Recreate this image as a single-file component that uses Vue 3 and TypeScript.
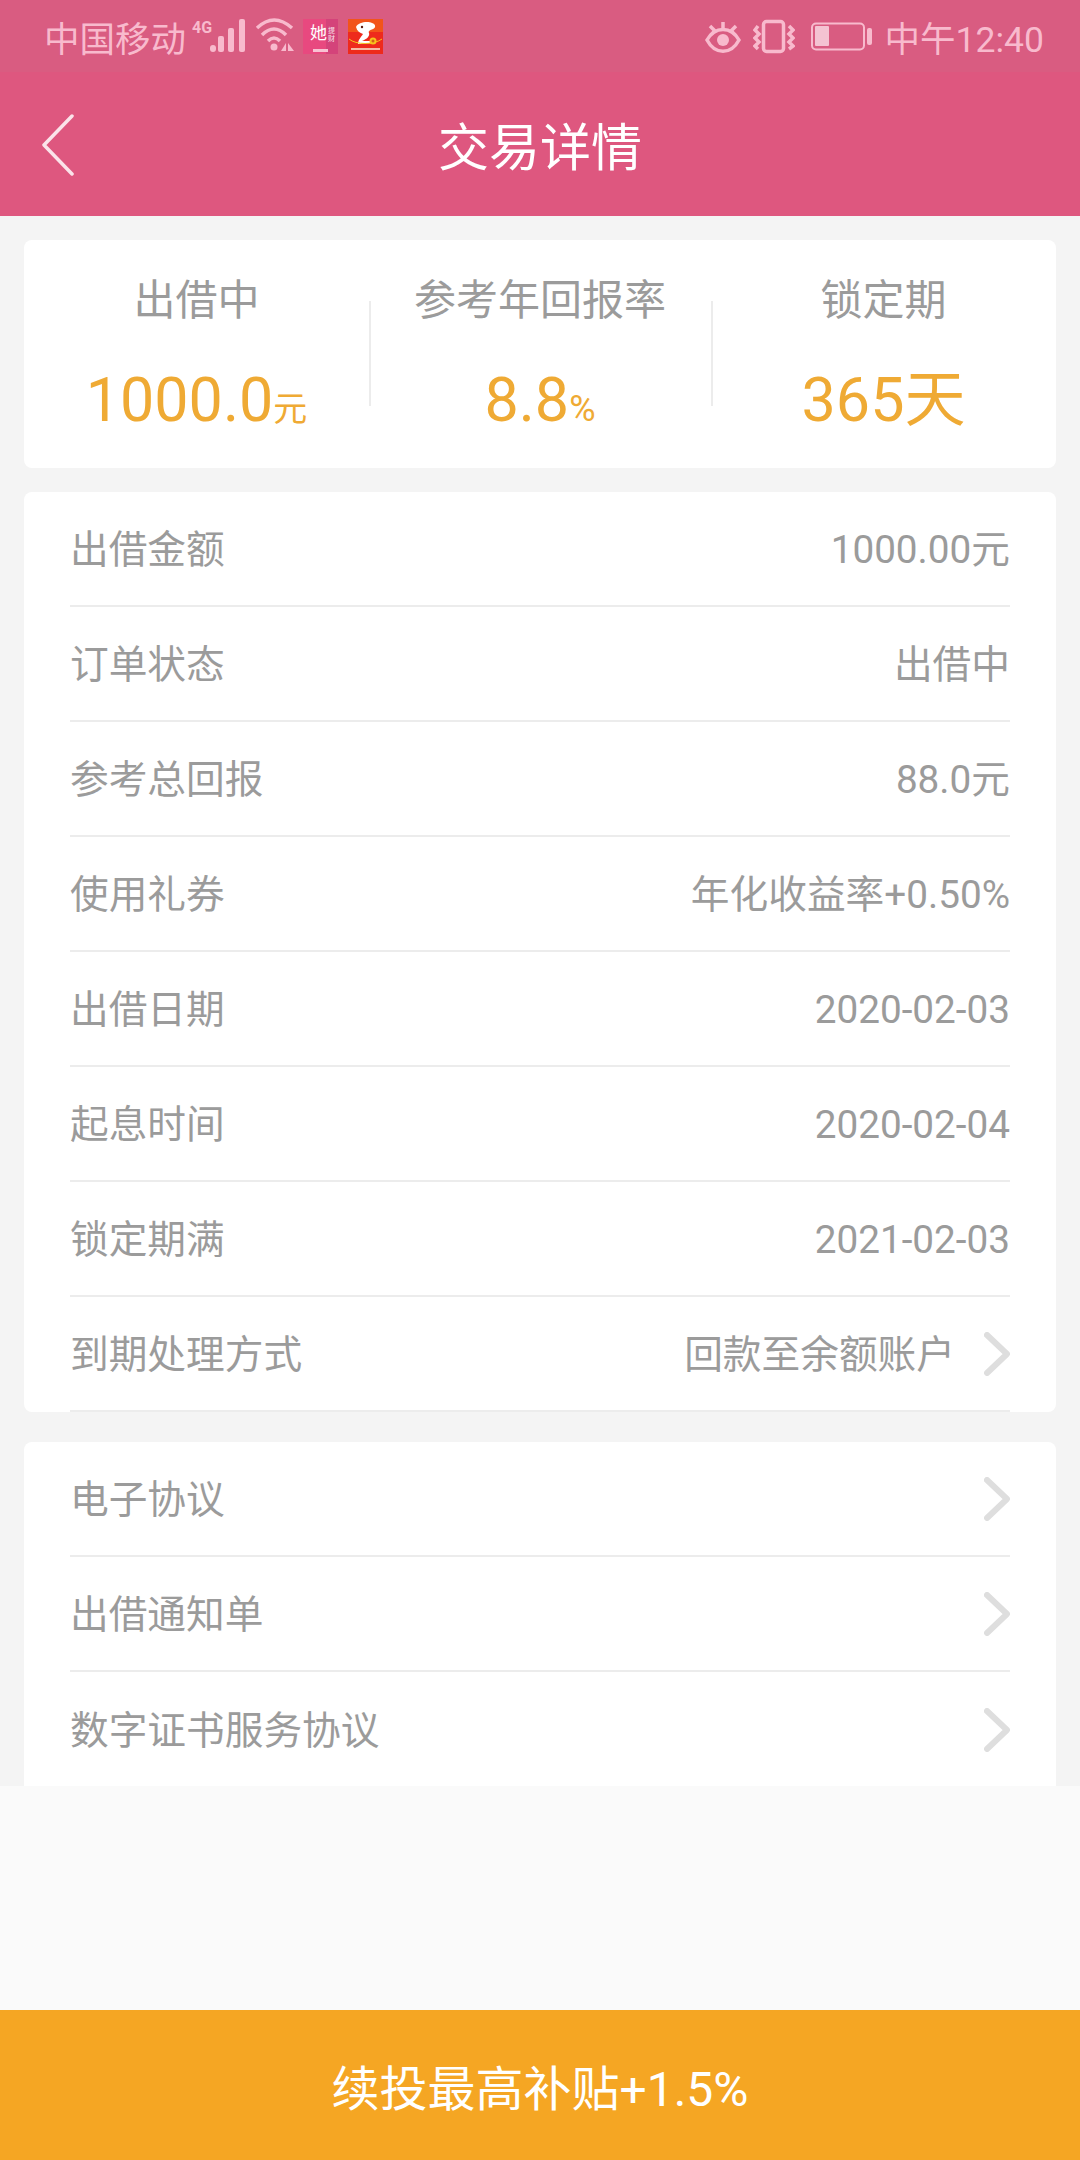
<script setup lang="ts">
const stats = [
  { label: '出借中', value: '1000.0', unit: '元', unitClass: 'yuan' },
  { label: '参考年回报率', value: '8.8', unit: '%', unitClass: 'percent' },
  { label: '锁定期', value: '365', unit: '天', unitClass: '' },
]

const details = [
  { label: '出借金额', value: '1000.00元' },
  { label: '订单状态', value: '出借中' },
  { label: '参考总回报', value: '88.0元' },
  { label: '使用礼券', value: '年化收益率+0.50%' },
  { label: '出借日期', value: '2020-02-03' },
  { label: '起息时间', value: '2020-02-04' },
  { label: '锁定期满', value: '2021-02-03' },
]

const links = ['电子协议', '出借通知单', '数字证书服务协议']
</script>

<template>
  <div class="page">
    <div class="statusbar">
      <div class="status-left">
        <span class="carrier">中国移动</span>
        <svg class="signal" width="54" height="36" viewBox="0 0 54 36">
          <text x="0" y="15" class="net">4G</text>
          <rect x="18" y="27" width="6" height="7" rx="3" />
          <rect x="26" y="18" width="6" height="16" rx="2" />
          <rect x="36" y="10" width="6" height="24" rx="2" />
          <rect x="47" y="1" width="6" height="33" rx="2" />
        </svg>
        <svg class="wifi" width="39" height="36" viewBox="0 0 39 36">
          <path d="M2 10 Q19 -6 37 10" />
          <path d="M7 17 Q19 5 31 17" />
          <path d="M13 23 Q19 17 25 23" />
          <circle cx="19" cy="29" r="3.5" class="fill" />
          <path d="M31 25 L26 33 H31 Z" class="fill" />
          <path d="M33 25 L39 33 H33 Z" class="fill" />
        </svg>
        <div class="she">
          <span class="she-side">提<br />财</span>
          <span class="she-main">她</span>
          <span class="she-foot"></span>
        </div>
        <svg class="joy" width="35" height="35" viewBox="0 0 35 35">
          <rect width="35" height="35" fill="#ee2a1c" />
          <rect width="35" height="13" fill="#f2541a" />
          <path d="M8 8 C10 3 20 2 24 4 C28 5 28 9 25 10 C22 11 20 12 21 14 C22 17 19 20 14 22 L24 22 L24 24 L10 25 C10 21 13 18 15 15 C12 14 9 12 8 8 Z" fill="#fff" />
          <circle cx="14" cy="8" r="1.2" fill="#5b1a10" />
          <path d="M1 20 C8 26 26 26 34 20" fill="none" stroke="#f6c21d" stroke-width="1" />
          <circle cx="25" cy="22" r="3.5" fill="#f6c21d" />
          <path d="M23.5 22 H26.5 M25 20.5 V23.5" stroke="#c8401a" stroke-width="1" />
          <rect x="3" y="29" width="29" height="2" fill="#f6b9a4" />
        </svg>
      </div>
      <div class="status-right">
        <svg class="eye" width="36" height="36" viewBox="0 0 36 36">
          <path d="M2 22 C10 8 26 8 34 22 C26 37 10 37 2 22 Z" />
          <circle cx="18" cy="22" r="6" class="fill" />
          <path d="M18 4 V10 M5 8 L10 13 M31 8 L26 13" />
        </svg>
        <svg class="vibrate" width="42" height="36" viewBox="0 0 42 36">
          <rect x="10.5" y="3.5" width="20" height="30" rx="3" />
          <path d="M5 8 L2 12 L6 16 L2 20 L6 24 L2 28 L5 31" />
          <path d="M36 8 L40 12 L36 16 L40 20 L36 24 L40 28 L36 31" />
        </svg>
        <svg class="battery" width="61" height="36" viewBox="0 0 61 36">
          <rect x="1" y="5.5" width="52" height="26" rx="4" class="thin" />
          <rect x="4" y="8" width="14" height="20" rx="1" class="batt-fill" />
          <rect x="56" y="10" width="5" height="17" rx="2" class="fill" />
        </svg>
        <span class="clock">中午12:40</span>
      </div>
    </div>

    <header class="navbar">
      <svg class="back" width="34" height="62" viewBox="0 0 34 62">
        <path d="M31 2 L3 31 L31 60" />
      </svg>
      <span class="title">交易详情</span>
    </header>

    <main class="content">
      <section class="card stats">
        <div v-for="item in stats" :key="item.label" class="stat">
          <div class="stat-label">{{ item.label }}</div>
          <div class="stat-value">{{ item.value }}<span :class="item.unitClass">{{ item.unit }}</span></div>
        </div>
      </section>

      <section class="card list details">
        <div v-for="row in details" :key="row.label" class="row">
          <span>{{ row.label }}</span>
          <span>{{ row.value }}</span>
        </div>
        <div class="row">
          <span>到期处理方式</span>
          <span class="with-arrow">
            回款至余额账户
            <svg class="chevron" width="26" height="44" viewBox="0 0 26 44"><path d="M3 3 L23 22 L3 41" /></svg>
          </span>
        </div>
      </section>

      <section class="card list links">
        <div v-for="link in links" :key="link" class="row">
          <span>{{ link }}</span>
          <svg class="chevron" width="26" height="44" viewBox="0 0 26 44"><path d="M3 3 L23 22 L3 41" /></svg>
        </div>
      </section>
    </main>

    <div class="spacer"></div>
    <footer class="footer">续投最高补贴+1.5%</footer>
  </div>
</template>

<style>
html, body { margin: 0; padding: 0; }
</style>

<style scoped>
.page {
  width: 1080px;
  height: 2160px;
  display: flex;
  flex-direction: column;
  background: #fafafa;
  font-family: Roboto, "Noto Sans CJK SC", sans-serif;
  overflow: hidden;
}

.statusbar {
  height: 72px;
  flex: none;
  box-sizing: border-box;
  padding: 0 36px 0 44px;
  display: flex;
  align-items: center;
  justify-content: space-between;
  background: #d95c81;
  color: #f8bacd;
  font-size: 35.5px;
}
.status-left, .status-right { display: flex; align-items: center; }
.signal { margin-left: 6px; }
.signal rect, .fill { fill: #f8bacd; stroke: none; }
.net { font-size: 16px; font-weight: 700; fill: #f8bacd; }
.wifi { margin-left: 9px; }
.wifi path, .eye path, .vibrate rect, .vibrate path, .battery rect {
  fill: none;
  stroke: #f8bacd;
  stroke-width: 3.5;
}
.wifi path.fill, .battery rect.fill { fill: #f8bacd; stroke: none; }
.battery .thin { stroke-width: 2; }
.battery .batt-fill { fill: #f4c3d2; stroke: none; }

.she {
  position: relative;
  width: 35px;
  height: 35px;
  margin-left: 9px;
  display: flex;
  flex-direction: row-reverse;
  background: linear-gradient(to right, #e8497f 0 65%, #d4437a 65% 100%);
  color: #fff;
  line-height: 1;
}
.she-main { font-size: 17px; margin: 6px 0 0 0; }
.she-side { font-size: 7px; line-height: 8px; margin: 8px 3px 0 1px; opacity: 0.85; }
.she-foot {
  position: absolute;
  left: 10px;
  bottom: 2px;
  width: 15px;
  height: 3px;
  background: #f7c3d3;
}
.joy { flex: none; margin-left: 10px; }

.eye { margin-right: 12px; }
.vibrate { margin-right: 16px; }
.battery { margin-right: 13px; }

.navbar {
  height: 144px;
  flex: none;
  position: relative;
  display: flex;
  align-items: center;
  justify-content: center;
  background: #de577f;
}
.back {
  position: absolute;
  left: 41px;
  top: 42px;
}
.back path {
  fill: none;
  stroke: #fbe3ea;
  stroke-width: 3.5;
  stroke-linecap: round;
  stroke-linejoin: round;
}
.title {
  color: #fff;
  font-size: 51px;
}

.content {
  flex: none;
  height: 1570px;
  box-sizing: border-box;
  padding: 24px 24px 0;
  display: flex;
  flex-direction: column;
  gap: 24px;
  background: #f4f4f4;
}
.card {
  background: #fff;
  border-radius: 8px;
}

.stats {
  height: 228px;
  flex: none;
  display: grid;
  grid-template-columns: 345px 342px 345px;
  align-items: stretch;
}
.stat {
  position: relative;
  text-align: center;
}
.stat + .stat::before {
  content: "";
  position: absolute;
  left: 0;
  top: 61px;
  height: 105px;
  width: 2px;
  background: #ececec;
}
.stat-label {
  margin-top: 36px;
  color: #9b9b9b;
  font-size: 42px;
  line-height: 50px;
}
.stat-value {
  margin-top: 39px;
  color: #efaa34;
  font-size: 61px;
  line-height: 70px;
}
.stat-value .yuan { font-size: 34px; }
.stat-value .percent { font-size: 36px; }

.list { flex: none; padding: 0 46px; }
.details { height: 920px; }
.row {
  height: 115px;
  box-sizing: border-box;
  border-bottom: 2px solid #ececec;
  display: flex;
  align-items: center;
  justify-content: space-between;
  color: #9b9b9b;
  font-size: 38.7px;
  line-height: 50px;
}
.row > span { padding-top: 3px; }
.with-arrow {
  display: flex;
  align-items: center;
  gap: 29px;
}
.with-arrow .chevron { margin-top: -3px; }
.chevron { flex: none; }
.chevron path {
  fill: none;
  stroke: #dedede;
  stroke-width: 6;
  stroke-linecap: round;
  stroke-linejoin: round;
}

.links {
  height: 344px;
  margin-top: 6px;
  border-radius: 8px 8px 0 0;
}
.links .row:last-child { border-bottom: none; }

.spacer { flex: 1; }
.footer {
  height: 150px;
  flex: none;
  display: flex;
  align-items: center;
  justify-content: center;
  background: #f5a623;
  color: #fff;
  font-size: 48px;
}
</style>
